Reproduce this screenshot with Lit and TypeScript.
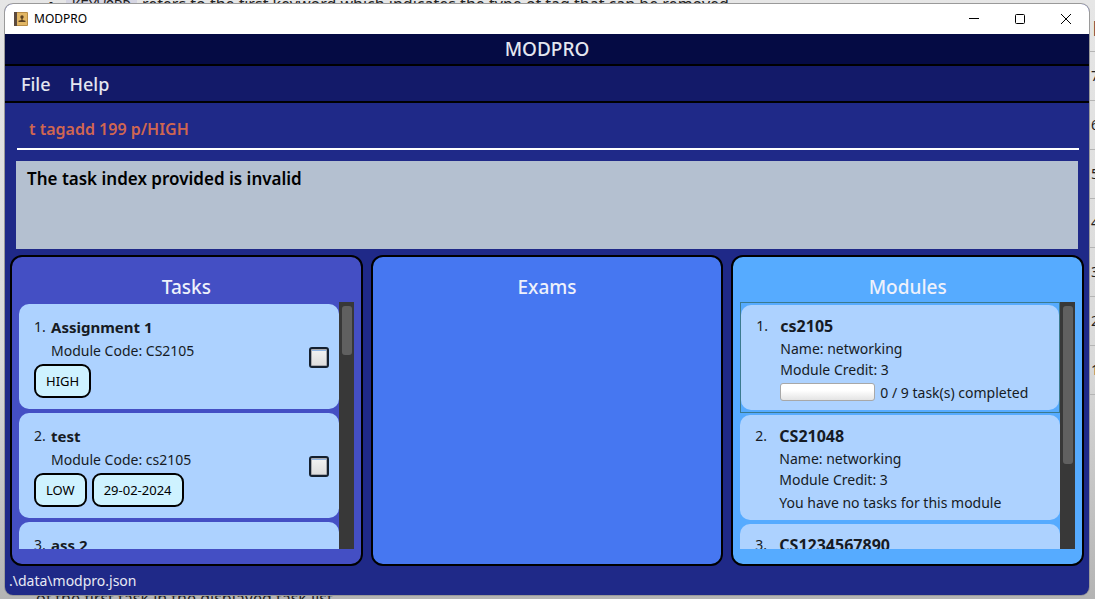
import { LitElement, html, css } from "lit";
import { customElement, property } from "lit/decorators.js";
import { classMap } from "lit/directives/class-map.js";

interface Task {
  name: string;
  code: string;
  tags: string[];
}

interface Module {
  code: string;
  name: string;
  credit: number;
  done: number;
  total: number;
}

const TASKS: Task[] = [
  { name: "Assignment 1", code: "CS2105", tags: ["HIGH"] },
  { name: "test", code: "cs2105", tags: ["LOW", "29-02-2024"] },
  { name: "ass 2", code: "cs2105", tags: [] },
];

const MODULES: Module[] = [
  { code: "cs2105", name: "networking", credit: 3, done: 0, total: 9 },
  { code: "CS21048", name: "networking", credit: 3, done: 0, total: 0 },
  { code: "CS1234567890", name: "networking", credit: 3, done: 0, total: 0 },
];

const base = css`
  * {
    box-sizing: border-box;
  }
  ul,
  ol,
  h1,
  h2,
  p {
    margin: 0;
    padding: 0;
    list-style: none;
    font-weight: inherit;
  }
`;

@customElement("task-card")
class TaskCard extends LitElement {
  @property({ type: Number }) index = 1;
  @property({ attribute: false }) task!: Task;

  static styles = [
    base,
    css`
      :host {
        display: flex;
        align-items: center;
        justify-content: space-between;
        min-height: 105px;
        padding: 12px 10px 11px 15px;
        border-radius: 10px;
        background: #add2ff;
        font-size: 14px;
        line-height: 22px;
      }
      .info {
        display: grid;
        grid-template-columns: 17px 1fr;
        row-gap: 2px;
        align-self: start;
      }
      .name {
        font-size: 15px;
        font-weight: 700;
      }
      .code {
        grid-column: 2;
      }
      .tags {
        grid-column: 1 / -1;
        display: flex;
        gap: 5px;
      }
      .tag {
        padding: 6px 10px;
        border: 2px solid #000;
        border-radius: 9px;
        background: #cef2ff;
        color: #000;
        font-size: 13px;
        line-height: 18px;
      }
      .done {
        appearance: none;
        flex: none;
        width: 20px;
        height: 21px;
        margin: 0;
        border: 2px solid #14202f;
        border-radius: 3px;
        background: linear-gradient(#f4f4f4, #dcdcdc) padding-box;
        box-shadow: inset 0 0 0 1px #a9a9ad, inset 0 2px 0 #8fb4e2;
      }
    `,
  ];

  render() {
    const { name, code, tags } = this.task;
    return html`
      <div class="info">
        <span>${this.index}.</span>
        <span class="name">${name}</span>
        <span class="code">Module Code: ${code}</span>
        <div class="tags">${tags.map((t) => html`<span class="tag">${t}</span>`)}</div>
      </div>
      <input class="done" type="checkbox" aria-label="Mark ${name} as done" />
    `;
  }
}

@customElement("module-card")
class ModuleCard extends LitElement {
  @property({ type: Number }) index = 1;
  @property({ attribute: false }) module!: Module;

  static styles = [
    base,
    css`
      :host {
        display: grid;
        grid-template-columns: 24px 1fr;
        align-content: start;
        min-height: 105px;
        padding: 11px 10px 7px 15px;
        border-radius: 10px;
        background: #add2ff;
        font-size: 14px;
        line-height: 20px;
      }
      .details {
        display: flex;
        flex-direction: column;
        gap: 1px;
      }
      .code {
        margin-bottom: 2px;
        font-size: 16px;
        font-weight: 700;
      }
      .status {
        display: flex;
        gap: 5px;
        margin-top: 2px;
      }
      .bar {
        appearance: none;
        width: 95px;
        height: 18px;
        border: 1px solid #a8a8a8;
        border-radius: 3px;
        background: linear-gradient(#fff 40%, #e4e4e4);
      }
      .bar::-webkit-progress-bar {
        background: none;
      }
    `,
  ];

  render() {
    const { code, name, credit, done, total } = this.module;
    return html`
      <span>${this.index}.</span>
      <div class="details">
        <span class="code">${code}</span>
        <span>Name: ${name}</span>
        <span>Module Credit: ${credit}</span>
        <div class="status">
          ${total
            ? html`<progress class="bar" aria-label="Tasks completed" value=${done} max=${total}></progress>
                <span>${done} / ${total} task(s) completed</span>`
            : html`<span>You have no tasks for this module</span>`}
        </div>
      </div>
    `;
  }
}

@customElement("scroll-list")
class ScrollList extends LitElement {
  @property({ type: Number }) visible = 100;

  static styles = [
    base,
    css`
      :host {
        display: flex;
        flex: 1;
        min-height: 0;
        overflow: hidden;
      }
      .view {
        flex: 1;
        min-width: 0;
        overflow: hidden;
      }
      .track {
        flex: none;
        width: 15px;
        padding: 4px 2px 4px 3px;
        background: #383838;
      }
      .thumb {
        border-radius: 3px;
        background: #606060;
      }
    `,
  ];

  render() {
    return html`
      <div class="view"><slot></slot></div>
      <div class="track"><div class="thumb" style="height: ${this.visible}%"></div></div>
    `;
  }
}

@customElement("desktop-backdrop")
class DesktopBackdrop extends LitElement {
  static styles = [
    base,
    css`
      :host {
        display: grid;
        grid-template-columns: 1fr 6px;
        height: 100vh;
        overflow: hidden;
        background: linear-gradient(#e6e6e6, #d9d9d9 60%, #b4b4b4);
        color: #222;
        font-size: 16px;
        line-height: 20px;
      }
      .page {
        display: flex;
        flex-direction: column;
        justify-content: space-between;
        min-width: 0;
        white-space: nowrap;
      }
      .top {
        margin: -6px 0 0 48px;
      }
      .bullet {
        margin-right: 12px;
      }
      .key {
        padding: 0 6px;
        margin-right: 1px;
        background: #d5d5e2;
        font: 14px/20px "Liberation Mono", monospace;
      }
      .bottom {
        margin: 0 0 -9px 36px;
      }
      .rows {
        padding-top: 3px;
        overflow: hidden;
        font-size: 14px;
      }
      .row {
        display: flex;
        align-items: center;
        height: 49px;
        padding-left: 2px;
        border-bottom: 1px solid #b5b5b5;
      }
    `,
  ];

  render() {
    return html`
      <div class="page">
        <p class="top">
          <span class="bullet">•</span><span class="key">KEYWORD</span> refers to the first keyword which
          indicates the type of tag that can be removed
        </p>
        <p class="bottom">of the first task in the displayed task list</p>
      </div>
      <ul class="rows">
        ${["|", 7, 6, 5, 4, 3, 2, 1].map((n) => html`<li class="row">${n}</li>`)}
      </ul>
    `;
  }
}

@customElement("app-root")
class AppRoot extends LitElement {
  static styles = [
    base,
    css`
      :host {
        display: grid;
        grid-template: 100vh / minmax(0, 1fr);
        overflow: hidden;
        font-family: "Noto Sans", "Open Sans", sans-serif;
        color: #161b24;
      }
      .backdrop,
      .desk {
        grid-area: 1 / 1;
      }
      .desk {
        display: flex;
        padding: 4px 6px 4px 5px;
        z-index: 1;
      }
      .window {
        flex: 1;
        min-width: 0;
        display: flex;
        flex-direction: column;
        border-radius: 8px;
        overflow: hidden;
        background: #1f2988;
        box-shadow: 0 0 0 1px #9a9a9a;
      }
      .titlebar {
        display: flex;
        align-items: center;
        height: 30px;
        padding-left: 9px;
        background: #fff;
        color: #000;
        font-size: 12px;
        line-height: 28px;
      }
      .caption {
        flex: 1;
        margin-left: 6px;
      }
      .control {
        display: grid;
        place-items: center;
        width: 46px;
        height: 30px;
        padding: 0;
        border: 0;
        background: none;
      }
      .banner {
        height: 32px;
        border-bottom: 2px solid #000;
        background: #050b44;
        color: #e4e6f0;
        text-align: center;
        font-size: 19px;
        line-height: 30px;
        font-weight: 500;
      }
      .menu {
        display: flex;
        gap: 19px;
        height: 37px;
        padding-left: 16px;
        border-bottom: 2px solid #000;
        background: #131a69;
      }
      .item {
        padding: 0;
        border: 0;
        background: none;
        color: #e4e6f0;
        font: 500 18px/34px "Noto Sans", "Open Sans", sans-serif;
      }
      .command {
        margin: 7px 10px 11px 12px;
        padding: 0 12px;
        height: 40px;
        border: 0;
        border-bottom: 2px solid #fff;
        border-radius: 0;
        outline: 0;
        background: none;
        color: #d06651;
        font: 600 16px/38px "Noto Sans", "Open Sans", sans-serif;
      }
      .result {
        flex: none;
        height: 88px;
        margin: 0 11px;
        padding: 6px 11px;
        border: 0;
        outline: 0;
        resize: none;
        background: #b4c0d0;
        color: #000;
        font: 600 17px/24px "Noto Sans", "Open Sans", sans-serif;
      }
      .panels {
        flex: 1;
        min-height: 0;
        display: grid;
        grid-template: minmax(0, 1fr) / repeat(3, minmax(0, 1fr));
        gap: 8px;
        padding: 6px 5px 0;
      }
      .panel {
        display: flex;
        flex-direction: column;
        min-height: 0;
        padding: 15px 7px;
        border: 2px solid #000;
        border-radius: 12px;
      }
      .tasks {
        background: #444fc4;
      }
      .exams {
        background: #4677f1;
      }
      .modules {
        background: #56abff;
      }
      .heading {
        color: #eef1fb;
        text-align: center;
        font-size: 19px;
        line-height: 30px;
        font-weight: 500;
      }
      .cell {
        padding: 2px 0;
      }
      .selected {
        border: 1px solid #3b7a8f;
      }
      .status {
        padding: 0 4px;
        color: #e8eaf4;
        font-size: 14px;
        line-height: 29px;
      }
    `,
  ];

  render() {
    return html`
      <desktop-backdrop class="backdrop" aria-hidden="true"></desktop-backdrop>
      <div class="desk">
        <main class="window">
          <header class="titlebar">
            <svg width="14" height="14" viewBox="0 0 14 14" aria-hidden="true">
              <rect width="14" height="14" rx="1" fill="#b98d45" />
              <rect x="3" y="1" width="10" height="12" fill="#e2b765" />
              <rect width="3" height="14" fill="#5b4a3e" />
              <circle cx="8" cy="5" r="1.700" fill="#5c4222" />
              <path d="M7.400 6h1.200v2l2.900.8V10H4.500V8.800l2.900-.8z" fill="#5c4222" />
            </svg>
            <span class="caption">MODPRO</span>
            <button class="control" aria-label="Minimize">
              <svg width="10" height="10"><path d="M0 4.500h10" stroke="#000" /></svg>
            </button>
            <button class="control" aria-label="Maximize">
              <svg width="10" height="10">
                <rect x=".5" y=".5" width="9" height="9" rx="1" fill="none" stroke="#000" />
              </svg>
            </button>
            <button class="control" aria-label="Close">
              <svg width="10" height="10"><path d="M0 0l10 10M10 0L0 10" stroke="#000" /></svg>
            </button>
          </header>
          <h1 class="banner">MODPRO</h1>
          <nav class="menu">
            <button class="item">File</button>
            <button class="item">Help</button>
          </nav>
          <input class="command" aria-label="Command" spellcheck="false" value="t tagadd 199 p/HIGH" />
          <textarea class="result" aria-label="Result" readonly spellcheck="false" .value=${"The task index provided is invalid"}></textarea>
          <div class="panels">
            <section class="panel tasks">
              <h2 class="heading">Tasks</h2>
              <scroll-list .visible=${20.5}>
                <ol>
                  ${TASKS.map(
                    (t, i) => html`<li class="cell"><task-card .index=${i + 1} .task=${t}></task-card></li>`,
                  )}
                </ol>
              </scroll-list>
            </section>
            <section class="panel exams">
              <h2 class="heading">Exams</h2>
            </section>
            <section class="panel modules">
              <h2 class="heading">Modules</h2>
              <scroll-list .visible=${66}>
                <ol>
                  ${MODULES.map(
                    (m, i) => html`<li class=${classMap({ cell: true, selected: i === 0 })}>
                      <module-card .index=${i + 1} .module=${m}></module-card>
                    </li>`,
                  )}
                </ol>
              </scroll-list>
            </section>
          </div>
          <footer class="status">.\\data\\modpro.json</footer>
        </main>
      </div>
    `;
  }
}
